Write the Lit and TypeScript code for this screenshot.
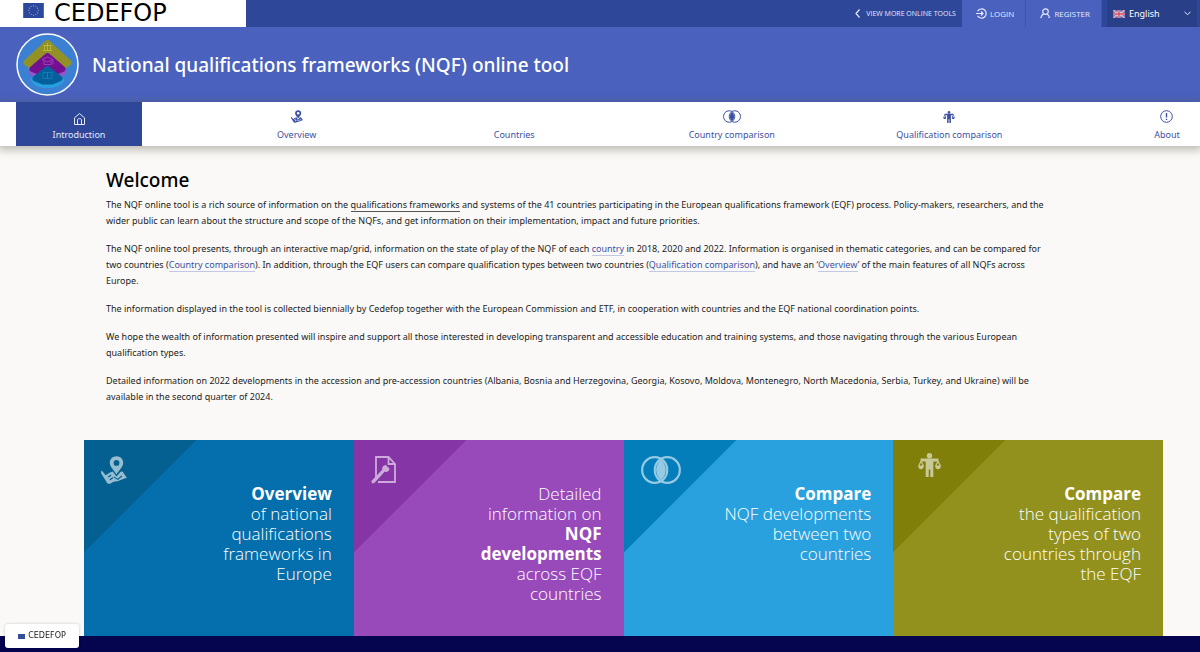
import { LitElement, html, css, svg, TemplateResult } from "lit";
import { customElement } from "lit/decorators.js";
import { classMap } from "lit/directives/class-map.js";

const euStars = Array.from({ length: 12 }, (_, i) => {
  const angle = (i * Math.PI) / 6;
  return svg`<circle cx=${11 + 5 * Math.sin(angle)} cy=${8 - 5 * Math.cos(angle)} r="0.6" fill="#b9bb6a"/>`;
});

const euFlag = (cls: string) => html`
  <svg class=${cls} viewBox="0 0 22 16" aria-hidden="true">
    <rect width="22" height="16" fill="#2c479e" />
    ${euStars}
  </svg>`;

const mapPin = svg`
  <path fill-rule="evenodd" d="M15.500 0.300c-3.800 0-6.700 2.800-6.700 6.500 0 3.900 3.700 6.900 6.700 11.700 3-4.800 6.700-7.800 6.700-11.700 0-3.700-2.900-6.500-6.700-6.500zm0 3.700a2.900 2.900 0 1 1 0 5.800 2.900 2.900 0 0 1 0-5.800z"/>
  <path fill-rule="evenodd" d="M0.800 14.600C0 15.200-0.200 16.600 0.400 17.800L5.200 25.500C6.200 27.600 7.800 28.300 9.600 27.400C13 25.200 15.500 25.800 18.500 24.600C21 23.600 23.400 22 26 22L21.500 15.500L19.600 15.800L15.500 20.600L11.800 15.400C9 16.200 7 17.600 4.600 19.200zM6.800 20.600L9.800 18.400L10.400 19.600L7.800 21.600zM8.400 23.400L11.600 21L12.200 22L9.200 24.600zM13.200 20.400L16.600 22.800L20.600 19.600L21.200 20.600L16.800 24L12.800 21.400z"/>`;

const circles = svg`
  <g fill="none" stroke="currentColor" stroke-width="2.200">
    <rect x="1.200" y="1.200" width="25" height="25.600" rx="12.500"/>
    <rect x="13.800" y="1.200" width="25" height="25.600" rx="12.500"/>
  </g>
  <path d="M20 3.800c6.500 6 6.500 14.400 0 20.400-6.500-6-6.500-14.400 0-20.400z"/>`;

const scales = svg`
  <circle cx="11.500" cy="2.800" r="2.700"/>
  <path d="M2.600 5.500H20.400V8.500H15.300V24H12.300V16.500H10.700V24H7.700V8.500H2.600z"/>
  <path fill-rule="evenodd" d="M3 7L0.200 12.500C0.200 15 1.400 16.200 3 16.200S5.900 15 5.900 12.500zM3 9.500L4.500 12.500H1.500z"/>
  <path fill-rule="evenodd" d="M20 7L17.200 12.500C17.200 15 18.400 16.200 20 16.200S22.900 15 22.900 12.500zM20 9.500L21.500 12.500H18.500z"/>`;

const report = svg`
  <path fill="none" stroke="currentColor" stroke-width="1.800" d="M5 21V1H17.500L24 8V26H7M17.500 1V8H24"/>
  <path d="M14.800 9L18.600 12.800L17.600 15L15 16.200L13.800 15.600L3.400 27L1 27.600L0.400 25L11.400 13.400L11 12.200L12.400 9.800z"/>`;

interface NavItem {
  label: string;
  icon: TemplateResult | string;
  active?: boolean;
}

interface Tile {
  tone: string;
  icon: TemplateResult;
  text: TemplateResult;
}

const navItems: NavItem[] = [
  {
    label: "Introduction",
    active: true,
    icon: html`<svg width="11" height="12" viewBox="0 0 11 12" fill="none" stroke="currentColor">
      <path d="M0.500 4.800L5.500 0.600L10.500 4.800V11.500H0.500zM3.500 11.500V6.600C3.500 5.300 7.500 5.300 7.500 6.600V11.500" />
    </svg>`,
  },
  {
    label: "Overview",
    icon: html`<svg width="12" height="13" viewBox="0 0 26 28" fill="currentColor">${mapPin}</svg>`,
  },
  { label: "Countries", icon: "" },
  {
    label: "Country comparison",
    icon: html`<svg width="18" height="13" viewBox="0 0 40 28" fill="currentColor">${circles}</svg>`,
  },
  {
    label: "Qualification comparison",
    icon: html`<svg width="12" height="12" viewBox="0 0 23 24" fill="currentColor">${scales}</svg>`,
  },
  {
    label: "About",
    icon: html`<svg width="13" height="13" viewBox="0 0 13 13" fill="none" stroke="currentColor">
      <circle cx="6.500" cy="6.500" r="5.800" />
      <path stroke-width="1.400" d="M6.500 3V7.500M6.500 8.700V10" />
    </svg>`,
  },
];

const tiles: Tile[] = [
  {
    tone: "blue",
    icon: html`<svg width="26" height="28" viewBox="0 0 26 28" fill="currentColor">${mapPin}</svg>`,
    text: html`<b>Overview</b><br />of national qualifications frameworks in Europe`,
  },
  {
    tone: "purple",
    icon: html`<svg width="25" height="28" viewBox="0 0 25 28" fill="currentColor">${report}</svg>`,
    text: html`Detailed information on <b>NQF developments</b> across EQF countries`,
  },
  {
    tone: "sky",
    icon: html`<svg width="40" height="28" viewBox="0 0 40 28" fill="currentColor">${circles}</svg>`,
    text: html`<b>Compare</b><br />NQF developments between two countries`,
  },
  {
    tone: "olive",
    icon: html`<svg width="23" height="24" viewBox="0 0 23 24" fill="currentColor">${scales}</svg>`,
    text: html`<b>Compare</b><br />the qualification types of two countries through the EQF`,
  },
];

@customElement("nqf-topbar")
class NqfTopbar extends LitElement {
  static styles = css`
    :host { display: flex; height: 27px; background: #2e4799; color: #e4e9ff; }
    .brand {
      display: flex; gap: 9px; width: 246px; box-sizing: border-box; padding-left: 22px;
      background: #fff; color: #000; text-decoration: none;
    }
    .flag { width: 23px; height: 15px; margin-top: 3px; }
    .word { font: 24px/27px "DejaVu Sans", sans-serif; }
    .actions { display: flex; margin-left: auto; font-family: "Open Sans", sans-serif; }
    .more, .btn { display: flex; align-items: center; color: inherit; text-decoration: none; font-size: 8px; }
    .more { gap: 6px; padding-right: 6px; font-size: 7px; }
    .btn {
      gap: 3px; padding: 0 11px 0 14px; border: 0; border-right: 1px solid #3c54af;
      background: #4a62bd; font-family: inherit;
    }
    .lang { display: flex; align-items: center; gap: 4px; width: 90px; margin: 0 3px 0 5px; padding: 0 6px; box-sizing: border-box; background: #293f87; }
    .select {
      flex: 1; min-width: 0; appearance: none; border: 0; padding: 0; background: transparent;
      color: #fff; font: 9px/16px "Noto Sans", sans-serif;
    }
  `;
  render() {
    return html`
      <a class="brand" href="#home">${euFlag("flag")}<span class="word">CEDEFOP</span></a>
      <div class="actions">
        <a class="more" href="#tools">
          <svg width="5" height="9" viewBox="0 0 5 9" fill="none" stroke="currentColor" stroke-width="1.200"><path d="M4.500 0.500L1 4.500L4.500 8.500" /></svg>
          VIEW MORE ONLINE TOOLS
        </a>
        <button class="btn" type="button">
          <svg width="11" height="11" viewBox="0 0 11 11" fill="none" stroke="currentColor" stroke-width="1.200">
            <path d="M1.600 3.200A4.600 4.600 0 1 1 1.600 7.800M0 5.500H7M5 3.500L7 5.500L5 7.500" />
          </svg>
          LOGIN
        </button>
        <button class="btn" type="button">
          <svg width="11" height="11" viewBox="0 0 11 11" fill="none" stroke="currentColor" stroke-width="1.200">
            <circle cx="5.500" cy="3.600" r="2.800" />
            <path d="M3.800 5.600C1.800 6.600 1.300 8 0.700 10.200M6.800 6C8.200 6.600 8.600 7.200 9 8M8.200 9.200H10.200" />
          </svg>
          REGISTER
        </button>
        <label class="lang">
          <svg width="12" height="8" viewBox="0 0 12 8" aria-hidden="true">
            <rect width="12" height="8" fill="#4b60a8" />
            <path d="M0 0L12 8M12 0L0 8" stroke="#e6dff0" stroke-width="1.600" />
            <path d="M0 0L12 8M12 0L0 8" stroke="#cf5a6e" stroke-width="0.700" />
            <path d="M6 0V8M0 4H12" stroke="#f0ecf5" stroke-width="2.600" />
            <path d="M6 0V8M0 4H12" stroke="#d2485c" stroke-width="1.400" />
          </svg>
          <select class="select" aria-label="Language"><option>English</option></select>
          <svg width="7" height="5" viewBox="0 0 7 5" fill="none" stroke="currentColor"><path d="M0.500 0.700L3.500 3.800L6.500 0.700" /></svg>
        </label>
      </div>`;
  }
}

@customElement("nqf-nav")
class NqfNav extends LitElement {
  static styles = css`
    :host { display: block; overflow-x: clip; background: #fff; box-shadow: 0 2px 8px 2px rgba(80, 75, 60, 0.35); }
    .list { display: flex; justify-content: space-between; margin: 0 -30px 0 16px; }
    .item {
      display: flex; flex-direction: column; justify-content: flex-end; align-items: center; gap: 5px;
      width: 126px; height: 44px; box-sizing: border-box; padding-bottom: 4px;
      color: #3c51a2; font-size: 9px; line-height: 14px; text-decoration: none; white-space: nowrap;
    }
    .active { background: #2e4799; color: #e4e9ff; gap: 3px; }
  `;
  render() {
    return html`<nav class="list" aria-label="Main">
      ${navItems.map(
        (n) => html`<a class=${classMap({ item: true, active: !!n.active })} href="#">${n.icon}<span>${n.label}</span></a>`
      )}
    </nav>`;
  }
}

@customElement("nqf-tiles")
class NqfTiles extends LitElement {
  static styles = css`
    :host { display: grid; grid-template-columns: repeat(4, 1fr); }
    .tile {
      display: flex; justify-content: space-between; align-items: flex-start;
      min-height: 196px; box-sizing: border-box; padding: 16px 22px 16px 17px;
      color: #fff; text-decoration: none;
      background: linear-gradient(135deg, var(--corner) 79px, var(--base) 80px);
    }
    .blue { --base: #046fac; --corner: #046090; }
    .purple { --base: #984abb; --corner: #8535a6; }
    .sky { --base: #29a1de; --corner: #047eba; }
    .olive { --base: #93911d; --corner: #807f09; padding-top: 13px; padding-left: 25px; }
    .olive .text { margin-top: 31px; }
    .icon { display: flex; opacity: 0.58; }
    .text {
      width: 150px; margin: 28px 0 0; text-align: right;
      font: 300 17px/20px "Open Sans", sans-serif;
    }
    .text b { font-weight: 700; }
  `;
  render() {
    return tiles.map(
      (t) => html`<a class="tile ${t.tone}" href="#"><span class="icon">${t.icon}</span><p class="text">${t.text}</p></a>`
    );
  }
}

@customElement("app-root")
class AppRoot extends LitElement {
  static styles = css`
    :host {
      display: flex; flex-direction: column; min-height: 100vh; background: #faf9f7;
      font-family: "Noto Sans", sans-serif; color: #1c1c1c;
    }
    .hero { display: flex; align-items: center; gap: 13px; height: 75px; padding: 0 16px; background: #4a62bd; color: #fff; }
    .title { margin: 0; font-size: 19px; line-height: 28px; font-weight: 500; }
    .main { flex: 1; padding: 20px 37px 0 84px; }
    .copy { padding: 0 118px 0 22px; font-size: 9px; line-height: 16px; }
    .welcome { margin: 0 0 3px; font-size: 19px; line-height: 28px; font-weight: 500; color: #000; }
    .copy p { margin: 0 0 12px; }
    .link { color: #3c51a2; text-decoration: none; border-bottom: 1px solid #c3c8e4; }
    .term { color: inherit; border-color: #555; }
    .tiles { margin-top: 35px; }
    .footer { height: 16px; background: #04044f; }
    .badge {
      position: fixed; left: 5px; bottom: 4px; display: flex; align-items: center; justify-content: center; gap: 3px;
      width: 74px; height: 24px; border-radius: 3px; background: #fff; color: #222; box-shadow: 0 0 3px #0003;
      font: 8px/12px "DejaVu Sans", sans-serif; text-decoration: none;
    }
    .mini { width: 7px; height: 5px; }
  `;
  render() {
    return html`
      <nqf-topbar></nqf-topbar>
      <header class="hero">
        <svg width="63" height="63" viewBox="0 0 63 63" aria-hidden="true">
          <circle cx="31.500" cy="31.500" r="30.500" fill="#3b80d3" stroke="#fff" stroke-width="1.500" />
          <g stroke-linejoin="round" stroke-width="6">
            <path d="M31.500 36L45 47L42 50L35 52H28L21 50L18 47z" fill="#279fe0" stroke="#279fe0" />
            <path d="M31.500 28L47.500 39L43 41.500H20L15.500 39z" fill="#9855c9" stroke="#9855c9" />
            <path d="M31.500 10L52.500 29.500L48.500 32.500H14.500L10.500 29.500z" fill="#929126" stroke="#929126" />
            <path d="M31.500 23L46.500 36L31.500 42L16.500 36z" fill="#73108f" stroke="#73108f" />
            <path d="M31.500 36L43.500 45.500L36 48.500H27L19.500 45.500z" fill="#05609b" stroke="#05609b" />
          </g>
          <g fill="none" stroke="#c9c83c" stroke-opacity="0.700">
            <path d="M27.500 12.500H35.500M27 17.500H36M28.500 12.500V17M31.500 10V17M34.500 12.500V17" />
            <path stroke="#b14bd0" d="M26 26.500L31.500 24L37 26.500L31.500 29zM28 28V31.500H35V28M37 26.500V31.500" />
            <path stroke="#1686c4" d="M27 39.500H31.500V45.500H27zM31.500 39.500H36V45.500H31.500z" />
          </g>
        </svg>
        <h1 class="title">National qualifications frameworks (NQF) online tool</h1>
      </header>
      <nqf-nav></nqf-nav>
      <main class="main">
        <section class="copy">
          <h2 class="welcome">Welcome</h2>
          <p>The NQF online tool is a rich source of information on the <a class="link term" href="#">qualifications frameworks</a> and systems of the 41 countries participating in the European qualifications framework (EQF) process. Policy-makers, researchers, and the wider public can learn about the structure and scope of the NQFs, and get information on their implementation, impact and future priorities.</p>
          <p>The NQF online tool presents, through an interactive map/grid, information on the state of play of the NQF of each <a class="link" href="#">country</a> in 2018, 2020 and 2022. Information is organised in thematic categories, and can be compared for two countries (<a class="link" href="#">Country comparison</a>). In addition, through the EQF users can compare qualification types between two countries (<a class="link" href="#">Qualification comparison</a>), and have an ‘<a class="link" href="#">Overview</a>’ of the main features of all NQFs across Europe.</p>
          <p>The information displayed in the tool is collected biennially by Cedefop together with the European Commission and ETF, in cooperation with countries and the EQF national coordination points.</p>
          <p>We hope the wealth of information presented will inspire and support all those interested in developing transparent and accessible education and training systems, and those navigating through the various European qualification types.</p>
          <p>Detailed information on 2022 developments in the accession and pre-accession countries (Albania, Bosnia and Herzegovina, Georgia, Kosovo, Moldova, Montenegro, North Macedonia, Serbia, Turkey, and Ukraine) will be available in the second quarter of 2024.</p>
        </section>
        <nqf-tiles class="tiles"></nqf-tiles>
      </main>
      <footer class="footer"></footer>
      <a class="badge" href="#home">${euFlag("mini")}<span>CEDEFOP</span></a>`;
  }
}
